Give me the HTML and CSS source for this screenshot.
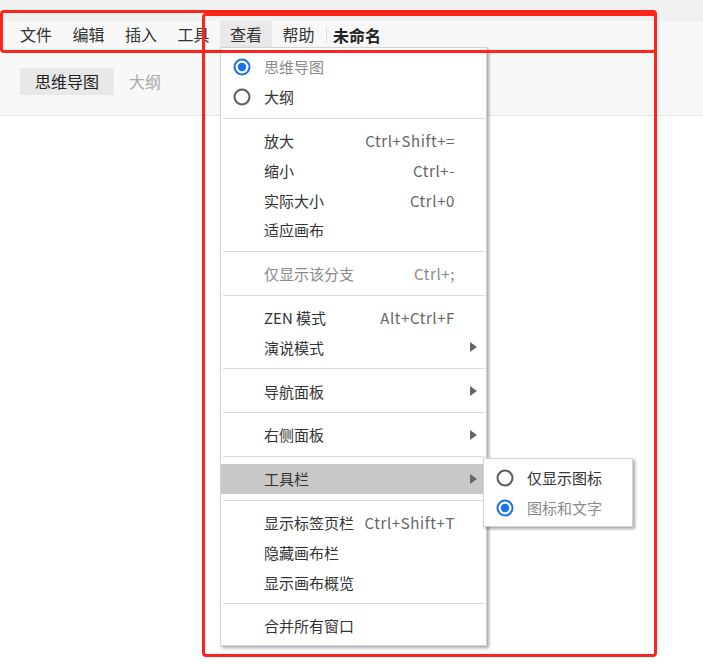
FILE: index.html
```html
<!DOCTYPE html>
<html lang="zh-CN">
<head>
  <meta charset="UTF-8" />
  <meta name="viewport" content="width=device-width, initial-scale=1.0"/>
  <title>未命名</title>
  <link rel="stylesheet" href="styles.css">
</head>
<body>

<div class="titlebar"></div>

<header class="menubar">
  <span class="menubar-item">文件</span>
  <span class="menubar-item">编辑</span>
  <span class="menubar-item">插入</span>
  <span class="menubar-item">工具</span>
  <span class="menubar-item active">查看</span>
  <span class="menubar-item">帮助</span>
  <span class="menubar-divider"></span>
  <span class="doc-title">未命名</span>
</header>

<div class="tabs">
  <span class="tab selected">思维导图</span>
  <span class="tab">大纲</span>
</div>

<!-- 查看 菜单 -->
<div class="menu view-menu">
  <div class="menu-item disabled">
    <svg class="radio" width="18" height="18" viewBox="0 0 18 18"><circle cx="9" cy="9" r="7.5" fill="none" stroke="#1a73e8" stroke-width="2"/><circle cx="9" cy="9" r="4.2" fill="#1a73e8"/></svg>
    <span class="label">思维导图</span>
  </div>
  <div class="menu-item">
    <svg class="radio" width="18" height="18" viewBox="0 0 18 18"><circle cx="9" cy="9" r="7.5" fill="none" stroke="#5a5a5a" stroke-width="2"/></svg>
    <span class="label">大纲</span>
  </div>
  <div class="menu-sep"></div>
  <div class="menu-item"><span class="label">放大</span><span class="shortcut">Ctrl+Shift+=</span></div>
  <div class="menu-item"><span class="label">缩小</span><span class="shortcut">Ctrl+-</span></div>
  <div class="menu-item"><span class="label">实际大小</span><span class="shortcut">Ctrl+0</span></div>
  <div class="menu-item"><span class="label">适应画布</span></div>
  <div class="menu-sep"></div>
  <div class="menu-item disabled"><span class="label">仅显示该分支</span><span class="shortcut">Ctrl+;</span></div>
  <div class="menu-sep"></div>
  <div class="menu-item"><span class="label">ZEN 模式</span><span class="shortcut">Alt+Ctrl+F</span></div>
  <div class="menu-item has-sub"><span class="label">演说模式</span><span class="arrow"></span></div>
  <div class="menu-sep"></div>
  <div class="menu-item has-sub"><span class="label">导航面板</span><span class="arrow"></span></div>
  <div class="menu-sep"></div>
  <div class="menu-item has-sub"><span class="label">右侧面板</span><span class="arrow"></span></div>
  <div class="menu-sep"></div>
  <div class="menu-item has-sub hover">
    <span class="label">工具栏</span><span class="arrow"></span>
    <div class="menu submenu">
      <div class="menu-item">
        <svg class="radio" width="18" height="18" viewBox="0 0 18 18"><circle cx="9" cy="9" r="7.5" fill="none" stroke="#5a5a5a" stroke-width="2"/></svg>
        <span class="label">仅显示图标</span>
      </div>
      <div class="menu-item disabled">
        <svg class="radio" width="18" height="18" viewBox="0 0 18 18"><circle cx="9" cy="9" r="7.5" fill="none" stroke="#1a73e8" stroke-width="2"/><circle cx="9" cy="9" r="4.2" fill="#1a73e8"/></svg>
        <span class="label">图标和文字</span>
      </div>
    </div>
  </div>
  <div class="menu-sep"></div>
  <div class="menu-item"><span class="label">显示标签页栏</span><span class="shortcut">Ctrl+Shift+T</span></div>
  <div class="menu-item"><span class="label">隐藏画布栏</span></div>
  <div class="menu-item"><span class="label">显示画布概览</span></div>
  <div class="menu-sep"></div>
  <div class="menu-item"><span class="label">合并所有窗口</span></div>
</div>

<!-- 红框标注 -->
<div class="mark mark-bar"></div>
<div class="mark mark-menu"></div>

</body>
</html>
```

FILE: styles.css
```css
body {
  margin: 0;
  font-family: "Noto Sans CJK SC", "Noto Sans", sans-serif;
  color: #333;
  background: #fff;
  position: relative;
  height: 665px;
  overflow: hidden;
}

.titlebar {
  height: 21px;
  background: #f1f1f1;
}

.menubar {
  display: flex;
  align-items: center;
  height: 27px;
  padding-left: 10px;
  background: #f8f8f8;
  font-size: 16px;
}

.menubar-item {
  padding: 0 10px;
  margin-right: 0.5px;
  height: 27px;
  line-height: 27px;
  color: #333;
}

.menubar-item.active {
  background: #e9e9e9;
}

.menubar-divider {
  width: 1px;
  height: 16px;
  background: #ddd;
  margin: 0 6px 0 1px;
}

.doc-title {
  font-weight: bold;
  color: #222;
}

.tabs {
  display: flex;
  align-items: center;
  height: 67px;
  padding-left: 20px;
  background: #f8f8f8;
  border-bottom: 1px solid #e6e6e6;
  font-size: 16px;
}

.tab {
  height: 27px;
  line-height: 27px;
  padding: 0 15px;
  color: #aaa;
}

.tab.selected {
  background: #e8e8e8;
  color: #222;
}

.menu {
  position: absolute;
  background: #fff;
  border: 1px solid #d4d4d4;
  box-shadow: 2px 2px 3px rgba(0, 0, 0, 0.35);
  padding: 4px 0;
  font-size: 15px;
}

.view-menu {
  left: 220px;
  top: 47px;
  width: 265px;
}

.menu-item {
  position: relative;
  display: flex;
  align-items: center;
  height: 29.8px;
  padding: 0 31px 0 43px;
  color: #333;
}

.menu-item .label {
  flex: 1;
  white-space: nowrap;
}

.menu-item .shortcut {
  color: #666;
  letter-spacing: 0.6px;
}

.menu-item.disabled,
.menu-item.disabled .shortcut {
  color: #8a8a8a;
}

.menu-item.hover {
  background: #c8c8c8;
}

.radio {
  position: absolute;
  left: 12px;
  top: 6px;
}

.arrow {
  position: absolute;
  right: 9px;
  top: 10px;
  width: 0;
  height: 0;
  border-top: 5px solid transparent;
  border-bottom: 5px solid transparent;
  border-left: 7px solid #666;
}

.menu-sep {
  height: 1px;
  background: #dcdcdc;
  margin: 6px 1px 7px 2px;
}

.submenu {
  left: 262px;
  top: -6px;
  width: 148px;
  z-index: 2;
}

.submenu .menu-item {
  padding-right: 20px;
}

.mark {
  position: absolute;
  border: 3.5px solid #ff2419;
  border-radius: 4px;
  pointer-events: none;
}

.mark-bar {
  left: 0;
  top: 10px;
  width: 651px;
  height: 37px;
}

.mark-menu {
  left: 202px;
  top: 13px;
  width: 449px;
  height: 638px;
}
```
